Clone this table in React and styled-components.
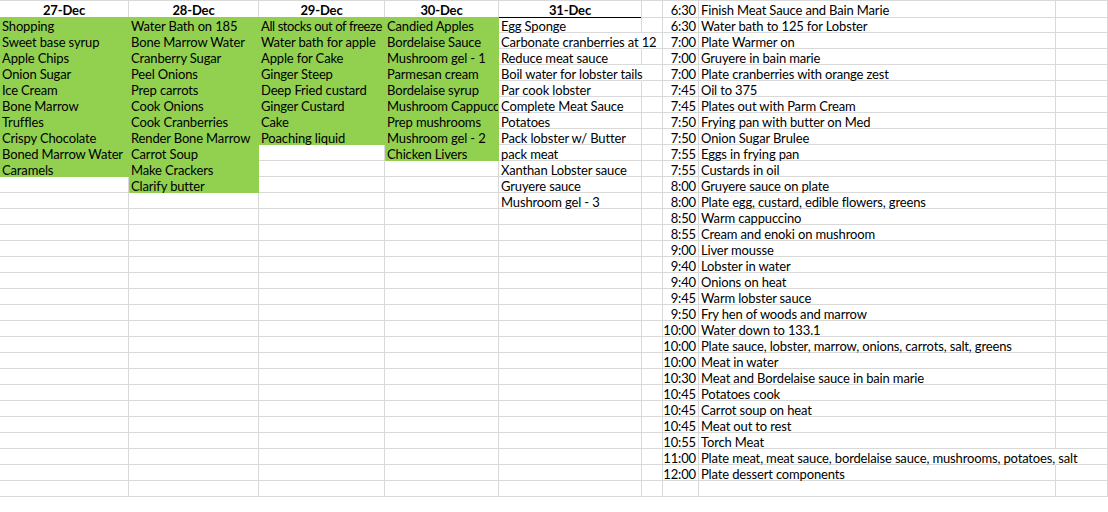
import React from "react";
import styled, { createGlobalStyle, css } from "styled-components";

const GREEN = "#92d050";
const GRID = "#d9d9d9";

const GlobalStyle = createGlobalStyle`
  html, body { margin: 0; padding: 0; background: #ffffff; }
  body {
    font-family: Lato, "Open Sans", "Liberation Sans", sans-serif;
    color: #000;
    overflow: hidden;
  }
`;

const Sheet = styled.div`
  display: grid;
  grid-template-columns: 129px 130px 126px 114px 143px 21px 36px 357px 52px;
  grid-auto-rows: 16px;
  border-top: 1px solid ${GRID};
  width: 1108px;
  overflow: hidden;
  font-size: 13px;
  letter-spacing: -0.15px;
`;

const Cell = styled.div`
  box-sizing: border-box;
  height: ${(p) => (p.$header ? "17px" : "16px")};
  line-height: 15px;
  padding: ${(p) => (p.$align === "right" ? "2px 2px 0 0" : "2px 0 0 2px")};
  text-align: ${(p) => p.$align || "left"};
  white-space: nowrap;
  letter-spacing: ${(p) => (p.$tight ? "-0.4px" : "inherit")};
  overflow-x: ${(p) => (p.$spill ? "visible" : "clip")};
  overflow-y: visible;
  border-right: 1px solid
    ${(p) => (p.$green ? GREEN : p.$spill ? "transparent" : GRID)};
  border-bottom: 1px solid
    ${(p) => (p.$underline ? "#000" : p.$green ? GREEN : GRID)};
  background: ${(p) => (p.$green ? GREEN : "transparent")};
  ${(p) =>
    p.$bold &&
    css`
      font-weight: 700;
      text-align: center;
      padding: 2px 0 0 0;
    `}
`;

const dayCols = [
  {
    title: "27-Dec",
    green: 10,
    items: [
      "Shopping",
      "Sweet base syrup",
      "Apple Chips",
      "Onion Sugar",
      "Ice Cream",
      "Bone Marrow",
      "Truffles",
      "Crispy Chocolate",
      "Boned Marrow Water",
      "Caramels",
    ],
  },
  {
    title: "28-Dec",
    green: 11,
    items: [
      "Water Bath on 185",
      "Bone Marrow Water",
      "Cranberry Sugar",
      "Peel Onions",
      "Prep carrots",
      "Cook Onions",
      "Cook Cranberries",
      "Render Bone Marrow",
      "Carrot Soup",
      "Make Crackers",
      "Clarify butter",
    ],
  },
  {
    title: "29-Dec",
    green: 8,
    tight: ["All stocks out of freeze"],
    items: [
      "All stocks out of freeze",
      "Water bath for apple",
      "Apple for Cake",
      "Ginger Steep",
      "Deep Fried custard",
      "Ginger Custard",
      "Cake",
      "Poaching liquid",
    ],
  },
  {
    title: "30-Dec",
    green: 9,
    items: [
      "Candied Apples",
      "Bordelaise Sauce",
      "Mushroom gel - 1",
      "Parmesan cream",
      "Bordelaise syrup",
      "Mushroom Cappuccino",
      "Prep mushrooms",
      "Mushroom gel - 2",
      "Chicken Livers",
    ],
  },
  {
    title: "31-Dec",
    green: 0,
    spill: ["Carbonate cranberries at 12", "Boil water for lobster tails"],
    items: [
      "Egg Sponge",
      "Carbonate cranberries at 12",
      "Reduce meat sauce",
      "Boil water for lobster tails",
      "Par cook lobster",
      "Complete Meat Sauce",
      "Potatoes",
      "Pack lobster w/ Butter",
      "pack meat",
      "Xanthan Lobster sauce",
      "Gruyere sauce",
      "Mushroom gel - 3",
    ],
  },
];

const timeline = [
  ["6:30", "Finish Meat Sauce and Bain Marie"],
  ["6:30", "Water bath to 125 for Lobster"],
  ["7:00", "Plate Warmer on"],
  ["7:00", "Gruyere in bain marie"],
  ["7:00", "Plate cranberries with orange zest"],
  ["7:45", "Oil to 375"],
  ["7:45", "Plates out with Parm Cream"],
  ["7:50", "Frying pan with butter on Med"],
  ["7:50", "Onion Sugar Brulee"],
  ["7:55", "Eggs in frying pan"],
  ["7:55", "Custards in oil"],
  ["8:00", "Gruyere sauce on plate"],
  ["8:00", "Plate egg, custard, edible flowers, greens"],
  ["8:50", "Warm cappuccino"],
  ["8:55", "Cream and enoki on mushroom"],
  ["9:00", "Liver mousse"],
  ["9:40", "Lobster in water"],
  ["9:40", "Onions on heat"],
  ["9:45", "Warm lobster sauce"],
  ["9:50", "Fry hen of woods and marrow"],
  ["10:00", "Water down to 133.1"],
  ["10:00", "Plate sauce, lobster, marrow, onions, carrots, salt, greens"],
  ["10:00", "Meat in water"],
  ["10:30", "Meat and Bordelaise sauce in bain marie"],
  ["10:45", "Potatoes cook"],
  ["10:45", "Carrot soup on heat"],
  ["10:45", "Meat out to rest"],
  ["10:55", "Torch Meat"],
  ["11:00", "Plate meat, meat sauce, bordelaise sauce, mushrooms, potatoes, salt"],
  ["12:00", "Plate dessert components"],
];

const ROWS = 31;

export default function App() {
  const cells = [];
  for (let r = 0; r < ROWS; r++) {
    const header = r === 0;
    dayCols.forEach((col, c) => {
      const key = `d${r}-${c}`;
      if (header) {
        cells.push(
          <Cell key={key} $header $bold $underline>
            {col.title}
          </Cell>
        );
      } else {
        const idx = r - 1;
        const text = col.items[idx] || "";
        cells.push(
          <Cell
            key={key}
            $green={idx < col.green}
            $spill={col.spill ? col.spill.includes(text) : false}
            $tight={col.tight ? col.tight.includes(text) : false}
          >
            {text}
          </Cell>
        );
      }
    });
    const t = timeline[r];
    const long = t && t[1].length > 60;
    cells.push(<Cell key={`f${r}`} $header={header} />);
    cells.push(
      <Cell key={`g${r}`} $header={header} $align="right">
        {t ? t[0] : ""}
      </Cell>
    );
    cells.push(
      <Cell key={`h${r}`} $header={header} $spill={long}>
        {t ? t[1] : ""}
      </Cell>
    );
    cells.push(<Cell key={`i${r}`} $header={header} />);
  }
  return (
    <>
      <GlobalStyle />
      <Sheet>{cells}</Sheet>
    </>
  );
}
